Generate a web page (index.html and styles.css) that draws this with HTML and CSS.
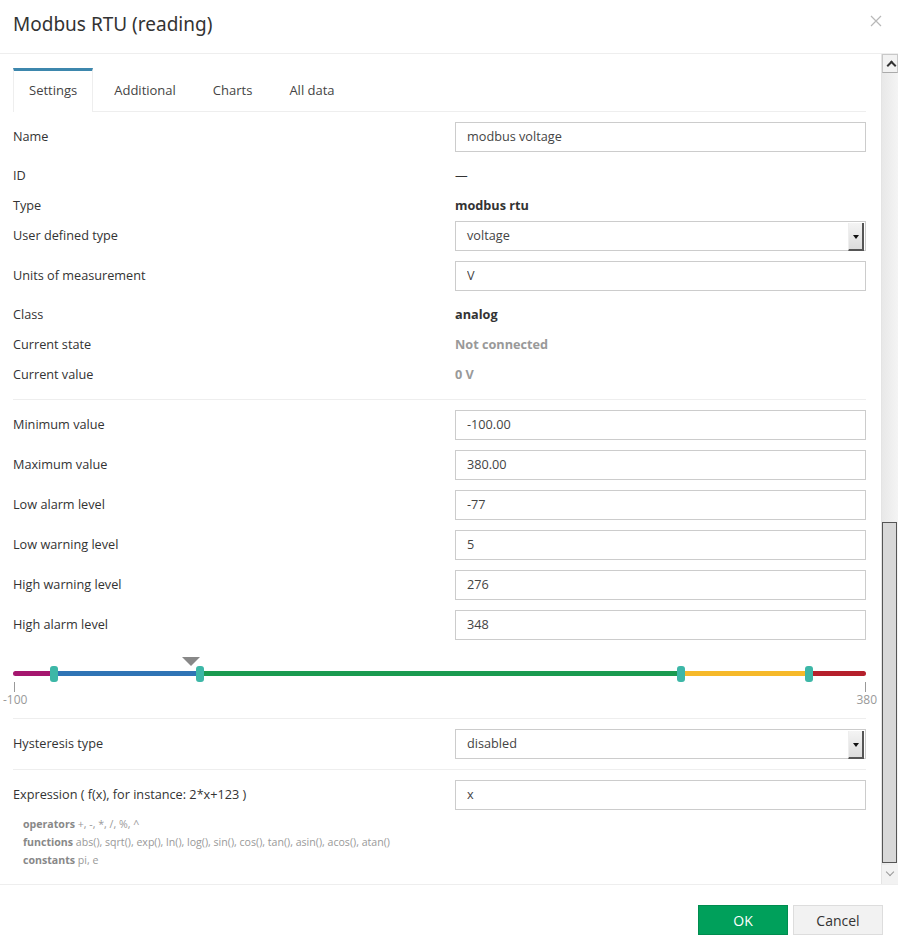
FILE: index.html
```html
<!DOCTYPE html>
<html lang="en">

<head>
    <meta charset="UTF-8">
    <title>Modbus RTU (reading)</title>
    <link rel="stylesheet" href="styles.css">
</head>

<body>
    <div class="dialog">
        <div class="dialog-head">
            <h1>Modbus RTU (reading)</h1>
            <span class="close">
                <svg width="12" height="12" viewBox="0 0 12 12"><path d="M1 1L11 11M11 1L1 11" stroke="#b8b8b8" stroke-width="1.2" /></svg>
            </span>
        </div>

        <div class="dialog-body">
            <div class="content">
                <ul class="tabs">
                    <li class="tab active">Settings</li>
                    <li class="tab">Additional</li>
                    <li class="tab">Charts</li>
                    <li class="tab">All data</li>
                </ul>

                <div class="section">
                    <div class="row field-row">
                        <span class="label">Name</span>
                        <input class="input" type="text" value="modbus voltage">
                    </div>
                    <div class="row text-row">
                        <span class="label">ID</span>
                        <span class="value">—</span>
                    </div>
                    <div class="row text-row">
                        <span class="label">Type</span>
                        <span class="value strong">modbus rtu</span>
                    </div>
                    <div class="row field-row">
                        <span class="label">User defined type</span>
                        <div class="select">voltage<span class="select-btn"></span></div>
                    </div>
                    <div class="row field-row">
                        <span class="label">Units of measurement</span>
                        <input class="input" type="text" value="V">
                    </div>
                    <div class="row text-row">
                        <span class="label">Class</span>
                        <span class="value strong">analog</span>
                    </div>
                    <div class="row text-row">
                        <span class="label">Current state</span>
                        <span class="value muted">Not connected</span>
                    </div>
                    <div class="row text-row">
                        <span class="label">Current value</span>
                        <span class="value muted">0 V</span>
                    </div>
                </div>

                <div class="section">
                    <div class="row field-row">
                        <span class="label">Minimum value</span>
                        <input class="input" type="text" value="-100.00">
                    </div>
                    <div class="row field-row">
                        <span class="label">Maximum value</span>
                        <input class="input" type="text" value="380.00">
                    </div>
                    <div class="row field-row">
                        <span class="label">Low alarm level</span>
                        <input class="input" type="text" value="-77">
                    </div>
                    <div class="row field-row">
                        <span class="label">Low warning level</span>
                        <input class="input" type="text" value="5">
                    </div>
                    <div class="row field-row">
                        <span class="label">High warning level</span>
                        <input class="input" type="text" value="276">
                    </div>
                    <div class="row field-row">
                        <span class="label">High alarm level</span>
                        <input class="input" type="text" value="348">
                    </div>

                    <!-- level scale -100 .. 380 -->
                    <div class="scale">
                        <div class="marker" style="left:20.83%"></div>
                        <div class="track">
                            <span class="seg alarm-low" style="width:4.79%"></span>
                            <span class="seg warn-low" style="width:17.08%"></span>
                            <span class="seg normal" style="width:56.46%"></span>
                            <span class="seg warn-high" style="width:15%"></span>
                            <span class="seg alarm-high" style="width:6.67%"></span>
                        </div>
                        <span class="handle" style="left:4.79%"></span>
                        <span class="handle" style="left:21.875%"></span>
                        <span class="handle" style="left:78.33%"></span>
                        <span class="handle" style="left:93.33%"></span>
                        <div class="ticks">
                            <span class="tick">-100</span>
                            <span class="tick">380</span>
                        </div>
                    </div>
                </div>

                <div class="section">
                    <div class="row field-row">
                        <span class="label">Hysteresis type</span>
                        <div class="select">disabled<span class="select-btn"></span></div>
                    </div>
                </div>

                <div class="section last">
                    <div class="row field-row">
                        <span class="label">Expression ( f(x), for instance: 2*x+123 )</span>
                        <input class="input" type="text" value="x">
                    </div>
                    <div class="help">
                        <div><b>operators</b> +, -, *, /, %, ^</div>
                        <div><b>functions</b> abs(), sqrt(), exp(), ln(), log(), sin(), cos(), tan(), asin(), acos(), atan()</div>
                        <div><b>constants</b> pi, e</div>
                    </div>
                </div>
            </div>

            <div class="scrollbar">
                <span class="sb-btn up"></span>
                <div class="sb-track"><span class="sb-thumb"></span></div>
                <span class="sb-btn down"></span>
            </div>
        </div>

        <div class="dialog-foot">
            <button class="btn btn-ok">OK</button>
            <button class="btn btn-cancel">Cancel</button>
        </div>
    </div>
</body>

</html>
```

FILE: styles.css
```css
* {
    box-sizing: border-box;
}

body {
    margin: 0;
    font-family: "Open Sans", "Noto Sans", sans-serif;
    font-size: 12.7px;
    color: #333;
    background: #fff;
}

.dialog {
    width: 898px;
    height: 947px;
    display: flex;
    flex-direction: column;
}

/* Header */
.dialog-head {
    height: 54px;
    border-bottom: 1px solid #eee;
    display: flex;
    align-items: center;
    justify-content: space-between;
    padding: 0 16px 6px 13px;
}

.dialog-head h1 {
    margin: 0;
    font-family: "Noto Sans", sans-serif;
    font-weight: normal;
    font-size: 19px;
    color: #333;
}

.close {
    display: flex;
    margin-top: -6px;
}

/* Body + fake scrollbar */
.dialog-body {
    height: 830px;
    display: flex;
    overflow: hidden;
}

.content {
    flex: 1;
    padding: 14px 15px 0 13px;
}

.tabs {
    list-style: none;
    margin: 0;
    padding: 0;
    display: flex;
    gap: 5px;
    border-bottom: 1px solid #eee;
    height: 44px;
    font-size: 13px;
}

.tab {
    padding: 0 16px;
    line-height: 38px;
    border-top: 3px solid transparent;
    color: #444;
}

.tab.active {
    border-top-color: #3d87ad;
    border-left: 1px solid #eee;
    border-right: 1px solid #eee;
    background: #fff;
    height: 44px;
    padding: 0 15px;
}

.section {
    border-bottom: 1px solid #eee;
    padding: 10px 0 10px;
}

.section.last {
    border-bottom: none;
}

.row {
    display: grid;
    grid-template-columns: 442px 1fr;
    align-items: center;
}

.field-row {
    height: 30px;
    margin-bottom: 10px;
}

.field-row .label {
    padding-bottom: 3px;
}

.section .field-row:last-of-type,
.last .field-row {
    margin-bottom: 0;
}

.text-row {
    height: 30px;
}

.field-row + .text-row {
    margin-top: -2px;
}

.text-row + .field-row {
    margin-top: 1px;
}

.label {
    color: #333;
}

.value.strong {
    font-weight: bold;
}

.value.muted {
    font-weight: bold;
    color: #999;
}

.input,
.select {
    height: 30px;
    border: 1px solid #ccc;
    font: inherit;
    color: #444;
    padding: 0 11px 3px;
    background: #fff;
    width: 100%;
}

.select {
    position: relative;
    display: flex;
    align-items: center;
}

.select-btn {
    position: absolute;
    right: 1px;
    top: 1px;
    width: 16px;
    height: 28px;
    background: linear-gradient(#f4f4f4, #dcdcdc);
    border-right: 2px solid #555;
    border-bottom: 2px solid #555;
    border-left: 1px solid #eee;
}

.select-btn::after {
    content: "";
    position: absolute;
    left: 4px;
    top: 12px;
    border-left: 3px solid transparent;
    border-right: 3px solid transparent;
    border-top: 4px solid #111;
}

/* Level scale */
.scale {
    position: relative;
    height: 51px;
    margin-top: 17px;
}

.marker {
    position: absolute;
    top: 0;
    margin-left: -9px;
    border-left: 9px solid transparent;
    border-right: 9px solid transparent;
    border-top: 9px solid #888;
}

.track {
    position: absolute;
    top: 14px;
    left: 0;
    right: 0;
    height: 5px;
    display: flex;
    border-radius: 3px;
    overflow: hidden;
}

.seg {
    height: 100%;
}

.alarm-low { background: #a5166f; }
.warn-low { background: #2f74b5; }
.normal { background: #1a9b50; }
.warn-high { background: #f6b92a; }
.alarm-high { background: #b5202c; }

.handle {
    position: absolute;
    top: 9px;
    width: 8px;
    height: 16px;
    margin-left: -4px;
    border-radius: 3px;
    background: #3db7a7;
}

.ticks {
    position: absolute;
    top: 25px;
    left: 0;
    right: 0;
    display: flex;
    justify-content: space-between;
}

.tick {
    position: relative;
    padding-top: 10px;
    color: #999;
    font-size: 12px;
    line-height: 16px;
}

.tick::before {
    content: "";
    position: absolute;
    top: 0;
    width: 1px;
    height: 10px;
    background: #999;
}

.tick:first-child {
    margin-left: -10px;
}

.tick:first-child::before {
    left: 11px;
}

.tick:last-child {
    margin-right: -11px;
}

.tick:last-child::before {
    right: 11px;
}

.help {
    padding: 5px 0 0 10px;
    font-size: 10.6px;
    line-height: 18px;
    color: #999;
}

.help b {
    color: #888;
}

/* Scrollbar */
.scrollbar {
    width: 17px;
    display: flex;
    flex-direction: column;
    background: linear-gradient(90deg, #e8e8e8, #f4f4f4);
    border-left: 1px solid #e4e4e4;
}

.sb-btn {
    height: 19px;
    position: relative;
    background: #f2f2f2;
}

.sb-btn.up {
    border: 1px solid #c8c8c8;
    border-bottom-color: #aaa;
}

.sb-btn::after {
    content: "";
    position: absolute;
    left: 5px;
    width: 5px;
    height: 5px;
    border-left: 2px solid #333;
    border-top: 2px solid #333;
}

.sb-btn.up::after {
    top: 7px;
    transform: rotate(45deg);
}

.sb-btn.down::after {
    top: 4px;
    border-color: #999;
    border-width: 1px;
    transform: rotate(-135deg);
}

.sb-track {
    flex: 1;
    display: flex;
    flex-direction: column;
    justify-content: flex-end;
    padding-bottom: 2px;
}

.sb-thumb {
    height: 341px;
    background: #d8d8d8;
    border: 1px solid #555;
    margin: 0 1px 0 0;
}

/* Footer */
.dialog-foot {
    flex: 1;
    border-top: 1px solid #eee;
    display: flex;
    justify-content: flex-end;
    align-items: flex-start;
    gap: 5px;
    padding: 20px 15px 0 0;
}

.btn {
    width: 90px;
    height: 30px;
    font: inherit;
    font-size: 14px;
    border: 1px solid #ddd;
    cursor: pointer;
}

.btn-ok {
    background: #00a05b;
    border-color: #008c4f;
    color: #fff;
}

.btn-cancel {
    background: #f2f2f2;
    color: #333;
}
```
